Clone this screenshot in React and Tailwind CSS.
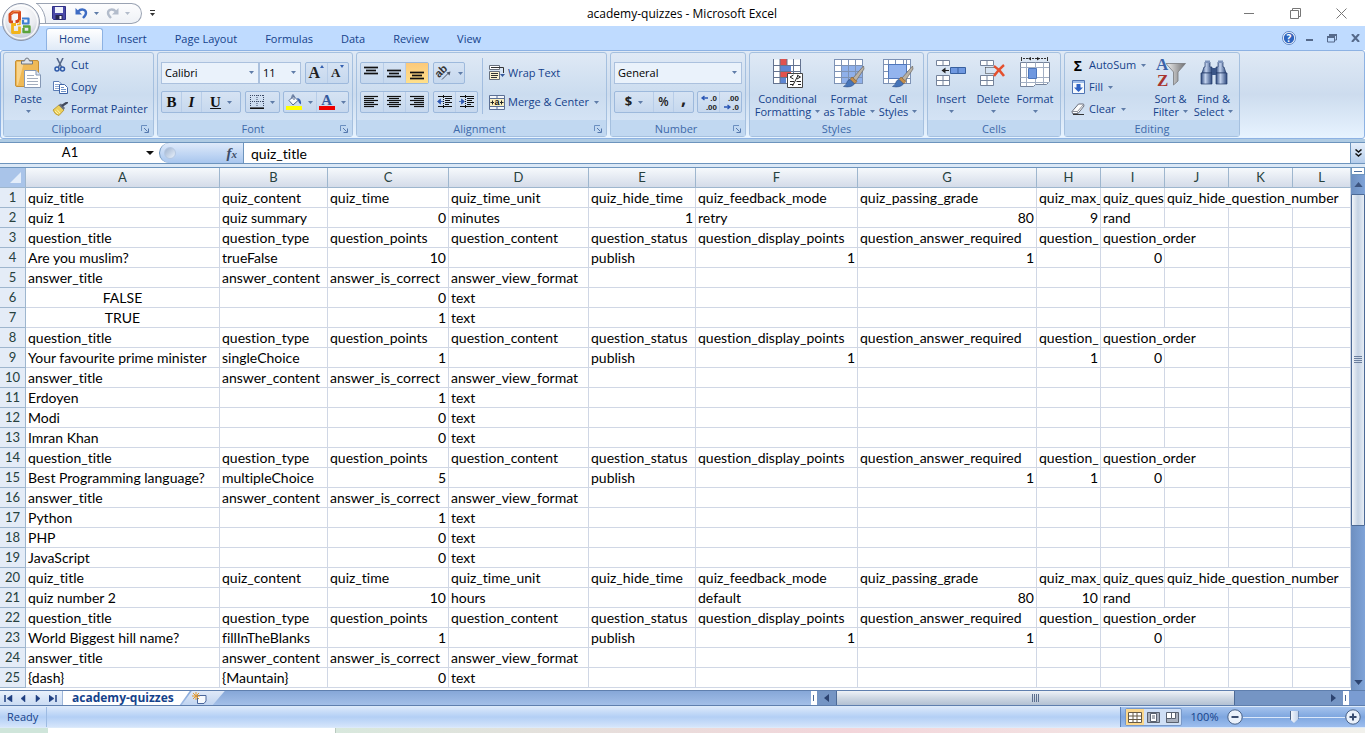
import React, { useState } from "react";
import clsx from "clsx";

const TABS = ["Home", "Insert", "Page Layout", "Formulas", "Data", "Review", "View"];

const COLUMNS = [
  { name: "A", width: "w-[194px]" },
  { name: "B", width: "w-[108px]" },
  { name: "C", width: "w-[121px]" },
  { name: "D", width: "w-[140px]" },
  { name: "E", width: "w-[107px]" },
  { name: "F", width: "w-[162px]" },
  { name: "G", width: "w-[179px]" },
  { name: "H", width: "w-16" },
  { name: "I", width: "w-16" },
  { name: "J", width: "w-16" },
  { name: "K", width: "w-16" },
  { name: "L", width: "" },
];

const QUIZ_HEAD = [
  "quiz_title",
  "quiz_content",
  "quiz_time",
  "quiz_time_unit",
  "quiz_hide_time",
  "quiz_feedback_mode",
  "quiz_passing_grade",
  "quiz_max_",
  "quiz_ques",
  { text: "quiz_hide_question_number", span: 3 },
];

const QUESTION_HEAD = [
  "question_title",
  "question_type",
  "question_points",
  "question_content",
  "question_status",
  "question_display_points",
  "question_answer_required",
  "question_",
  { text: "question_order", span: 2 },
];

const ANSWER_HEAD = [
  "answer_title",
  "answer_content",
  "answer_is_correct",
  "answer_view_format",
];

const ROWS = [
  QUIZ_HEAD,
  ["quiz 1", "quiz summary", 0, "minutes", 1, "retry", 80, 9, "rand"],
  QUESTION_HEAD,
  ["Are you muslim?", "trueFalse", 10, "", "publish", 1, 1, "", 0],
  ANSWER_HEAD,
  [false, "", 0, "text"],
  [true, "", 1, "text"],
  QUESTION_HEAD,
  ["Your favourite prime minister", "singleChoice", 1, "", "publish", 1, "", 1, 0],
  ANSWER_HEAD,
  ["Erdoyen", "", 1, "text"],
  ["Modi", "", 0, "text"],
  ["Imran Khan", "", 0, "text"],
  QUESTION_HEAD,
  ["Best Programming language?", "multipleChoice", 5, "", "publish", "", 1, 1, 0],
  ANSWER_HEAD,
  ["Python", "", 1, "text"],
  ["PHP", "", 0, "text"],
  ["JavaScript", "", 0, "text"],
  QUIZ_HEAD,
  ["quiz number 2", "", 10, "hours", "", "default", 80, 10, "rand"],
  QUESTION_HEAD,
  ["World Biggest hill name?", "fillInTheBlanks", 1, "", "publish", 1, 1, "", 0],
  ANSWER_HEAD,
  ["{dash}", "{Mauntain}", 0, "text"],
];

/* ---------- small shared pieces ---------- */

function Arrow({ className = "text-[#5f7ca8]" }) {
  return (
    <svg width="5" height="3" viewBox="0 0 5 3" className={clsx("shrink-0", className)}>
      <path d="M0 0H5L2.5 3Z" fill="currentColor" />
    </svg>
  );
}

function Group({ label, width, launcher, children }) {
  return (
    <section
      className={clsx(
        "flex flex-col shrink-0 rounded-[3px] border border-[#a5c0df] bg-linear-to-b from-[#dfe9f5] via-[#cbdcef] to-[#d9e7f8]",
        width
      )}
    >
      <div className="h-[68px] flex">{children}</div>
      <div className="h-4 pt-[2px] flex items-center bg-[#c1d8f1] text-[#3e6aaa]">
        <span className={clsx("flex-1 text-center", launcher && "pl-3")}>{label}</span>
        {launcher && (
          <button aria-label={`${label} options`} className="w-4 flex justify-center">
            <svg width="8" height="8" viewBox="0 0 8 8" fill="none" stroke="#6b8fc0">
              <path d="M.5 6V.5H6" />
              <path d="M3 3L6.5 6.5M7.5 3.5V7.5H3.5" stroke="#5578ad" />
            </svg>
          </button>
        )}
      </div>
    </section>
  );
}

function ToolBox({ children, className }) {
  return (
    <div
      className={clsx(
        "h-[22px] flex rounded-[2px] border border-[#9db9dc] bg-linear-to-b from-[#d6e3f3] to-[#c6d8ee] divide-x divide-[#b8cde8]",
        className
      )}
    >
      {children}
    </div>
  );
}

function Tool({ label, className, children, arrow }) {
  return (
    <button
      aria-label={label}
      className={clsx("flex-1 flex items-center justify-center gap-[6px]", className)}
    >
      {children}
      {arrow && <Arrow />}
    </button>
  );
}

function SmallButton({ icon, arrow, children }) {
  return (
    <button className="h-[22px] flex items-center gap-[3px] whitespace-nowrap">
      <span className="w-4 flex justify-center">{icon}</span>
      {children}
      {arrow && <Arrow className="ml-[2px] text-[#5f7ca8]" />}
    </button>
  );
}

function BigButton({ icon, lines, width }) {
  return (
    <button className={clsx("flex flex-col items-center pt-1 leading-[13px] whitespace-nowrap", width)}>
      <span className="h-8 mb-[3px] flex items-center">{icon}</span>
      <span>{lines[0]}</span>
      <span className="h-[13px] flex items-center gap-1">
        {lines[1]}
        <Arrow />
      </span>
    </button>
  );
}

function Picker({ label, options, width }) {
  return (
    <div className={clsx("relative h-[22px]", width)}>
      <select
        aria-label={label}
        className="appearance-none w-full h-full pl-[3px] border border-[#abc1de] bg-[#eaf2fb] text-black"
      >
        {options.map((o) => (
          <option key={o}>{o}</option>
        ))}
      </select>
      <span className="absolute right-[5px] top-[9px] pointer-events-none">
        <Arrow />
      </span>
    </div>
  );
}

/* ---------- icons ---------- */

function OfficeLogo() {
  return (
    <svg width="40" height="40" viewBox="0 0 40 40">
      <defs>
        <radialGradient id="orb" cx="50%" cy="30%" r="70%">
          <stop offset="0" stopColor="#fff" />
          <stop offset=".6" stopColor="#e9ebf0" />
          <stop offset="1" stopColor="#b9c0cf" />
        </radialGradient>
      </defs>
      <circle cx="20" cy="20" r="18.5" fill="url(#orb)" stroke="#8b95a8" />
      <circle cx="20" cy="20" r="16.5" fill="none" stroke="#fff" strokeWidth="1.5" opacity=".8" />
      <g fill="none" strokeLinejoin="round">
        <path d="M12 20H10.500Q9 20 9 18.500V12.500L12 10H18.500V17.500L16.500 19.500H14.500" stroke="#d7491c" strokeWidth="3" />
        <path d="M10 12L13 9.500H18.500" stroke="#f08a45" strokeWidth="1" />
        <path d="M21 16.500H27.500V21.500H22V18" stroke="#3f7fd0" strokeWidth="2.200" />
        <path d="M15 22.500H11.500V30.500H18.500V24.500" stroke="#f2b41b" strokeWidth="2.800" />
        <path d="M22 24.500H28.500V30H22.500V26" stroke="#5aa43a" strokeWidth="2.400" />
        <path d="M16 22.500H19V18" stroke="#f2b41b" strokeWidth="1.500" />
      </g>
    </svg>
  );
}

const SaveIcon = () => (
  <svg width="14" height="14" viewBox="0 0 14 14">
    <path d="M.5.500H13.500V13.500H1.500L.5 12.500Z" fill="#4a49a8" stroke="#2f2f86" />
    <path d="M3 1H11V7H3Z" fill="#eef1fb" />
    <path d="M3.500 9H10.500V13.500H3.500Z" fill="#26264f" />
    <path d="M7.500 10H9.500V13H7.500Z" fill="#fff" />
  </svg>
);

const UndoIcon = ({ redo }) => (
  <svg width="13" height="12" viewBox="0 0 13 12" className={redo ? "-scale-x-100" : ""}>
    <path
      d="M3 4.500C6 1.500 11 2 11 6C11 8 9.500 9.500 8 11"
      fill="none"
      stroke={redo ? "#b3bccb" : "#3e6cc4"}
      strokeWidth="2.400"
    />
    <path d="M.5 1V7.500H7Z" fill={redo ? "#b3bccb" : "#3e6cc4"} />
  </svg>
);

const PasteIcon = () => (
  <svg width="28" height="32" viewBox="0 0 28 32">
    <rect x="1.500" y="3.500" width="23" height="26" rx="1.500" fill="#efb956" stroke="#c68f35" />
    <path d="M3 5H10L4 28H3Z" fill="#f8d48d" />
    <path d="M7.500 7V4H10.500Q11 1 13 1T15.500 4H18.500V7Z" fill="#dfe3e8" stroke="#6f7783" />
    <path d="M10.500 13.500H22L26.500 18V30.500H10.500Z" fill="#fff" stroke="#8598b5" />
    <path d="M22 13.500V18H26.500" fill="#dbe5f2" stroke="#8598b5" />
    <path d="M13 18.500H20M13 21.500H24M13 24.500H24M13 27.500H24" stroke="#a4aebe" />
  </svg>
);

const CutIcon = () => (
  <svg width="12" height="14" viewBox="0 0 12 14" fill="none">
    <path d="M3 0L7.500 9M9 0L4.500 9" stroke="#56688a" strokeWidth="1.600" />
    <circle cx="3" cy="11" r="2" stroke="#2e59a8" strokeWidth="1.500" />
    <circle cx="8.500" cy="11" r="2" stroke="#2e59a8" strokeWidth="1.500" />
  </svg>
);

const CopyIcon = () => (
  <svg width="15" height="13" viewBox="0 0 15 13">
    <path d="M.5.500H6L8.500 3V9.500H.5Z" fill="#fff" stroke="#5a7cb5" />
    <path d="M2 3.500H6M2 5.500H6M2 7.500H6" stroke="#8fa9d3" />
    <path d="M6.500 3.500H11.500L14.500 6.500V12.500H6.500Z" fill="#fff" stroke="#3f65a6" />
    <path d="M8 6.500H11M8 8.500H13M8 10.500H13" stroke="#6f92c8" />
  </svg>
);

const PainterIcon = () => (
  <svg width="16" height="14" viewBox="0 0 16 14">
    <path d="M1 8L7 3L12 8L7 13.500Q3 13 1 8Z" fill="#ecd05c" stroke="#b3912c" strokeWidth=".8" />
    <path d="M3 9L6 12M5 7.500L8 11" stroke="#fff3b0" />
    <path d="M6.500 3L9 1.500L13 6L11.500 8Z" fill="#6a7180" />
    <path d="M10.500 3.500L15 .5" stroke="#424a5c" strokeWidth="2.200" strokeLinecap="round" />
  </svg>
);

const BorderIcon = () => (
  <svg width="14" height="14" viewBox="0 0 14 14" stroke="#3c4a66" fill="none">
    <path d="M0 .5H14M0 6.500H14M.5 0V12M7 0V12M13.500 0V12" strokeDasharray="1 1" />
    <path d="M0 13.200H14" stroke="#111" strokeWidth="1.600" />
  </svg>
);

const FillColorIcon = () => (
  <svg width="16" height="16" viewBox="0 0 16 16">
    <path d="M3 6.500L7.500 2L12 6.500L7 11Z" fill="#f7fafd" stroke="#51678f" />
    <path d="M6 5V1.500Q7.500-.5 8 2V6" fill="none" stroke="#51678f" />
    <path d="M11 4Q15.500 4 15 10.500Q12.500 9 12 6.500Z" fill="#3a63ad" />
    <path d="M0 12H16V16H0Z" fill="#ffff00" />
  </svg>
);

const FontColorIcon = () => (
  <span className="flex flex-col items-center">
    <span className="h-3 leading-3 font-['Liberation_Serif',serif] font-bold text-[15px] text-[#35599c]">A</span>
    <span className="w-4 h-1 bg-[#ee0000]" />
  </span>
);

function LinesIcon({ widths, align = "center", top = 0 }) {
  return (
    <svg width="15" height="14" viewBox="0 0 15 14" stroke="#111">
      {widths.map((w, i) => {
        const x = align === "left" ? 0 : align === "right" ? 14 - w : (14 - w) / 2;
        const y = top + i * (widths.length > 3 ? 2 : 3) + 1.5;
        return <path key={i} d={`M${x} ${y}H${x + w}`} strokeWidth={widths.length > 3 ? 1.2 : 1.7} />;
      })}
    </svg>
  );
}

const IndentIcon = ({ right }) => (
  <svg width="16" height="14" viewBox="0 0 16 14" stroke="#111">
    <path d="M1 1.500H15M8 3.500H15M8 5.500H13M8 7.500H15M8 9.500H12M1 11.500H15" strokeWidth="1.200" />
    <path d="M6.500 0V14" strokeDasharray="1 1" />
    {right ? (
      <path d="M0 6.500H3M2.500 4L5.500 6.500L2.500 9Z" stroke="#3058b0" fill="#3058b0" strokeWidth=".8" />
    ) : (
      <path d="M6 6.500H3M3.500 4L.5 6.500L3.500 9Z" stroke="#3058b0" fill="#3058b0" strokeWidth=".8" />
    )}
  </svg>
);

const OrientationIcon = () => (
  <svg width="16" height="14" viewBox="0 0 16 14" className="overflow-visible">
    <text
      x="-1"
      y="9"
      transform="rotate(-45 5 6)"
      className="font-['Liberation_Sans',sans-serif] text-[11px] font-bold"
      fill="#333"
    >
      ab
    </text>
    <path d="M6 13.500L13 6.500" stroke="#4b5568" />
    <path d="M14.500 5.500L10.500 6.500L13.500 9.500Z" fill="#4b5568" />
  </svg>
);

const WrapIcon = () => (
  <svg width="16" height="16" viewBox="0 0 16 16">
    <path d="M.5.500H10.500V4.500H.5Z" fill="#fff" stroke="#666f7d" />
    <path d="M.5 6.500H10.500V14.500H.5Z" fill="#fbf3cf" stroke="#666f7d" />
    <path d="M2 2.500H14.500V8" fill="none" stroke="#333" />
    <path d="M2 8.500H9M2 10.500H9M2 12.500H8" stroke="#333" />
    <path d="M11 9H16L13.500 12Z" fill="#35599c" />
  </svg>
);

const MergeIcon = () => (
  <svg width="16" height="15" viewBox="0 0 16 15">
    <path d="M.5.500H15.500V14.500H.5Z" fill="#f4f7fb" stroke="#5b6f94" />
    <path d="M8 0V3.500M8 11.500V15M0 3.500H16M0 11.500H16" stroke="#5b6f94" />
    <path d="M1 4H15V11H1Z" fill="#fbf0c0" />
    <path d="M1.500 7.500H5M11 7.500H14.500M3.500 5.500V9.500M12.500 5.500V9.500" stroke="#222" />
    <text x="5.500" y="10" className="font-['Liberation_Sans',sans-serif] text-[9px] font-bold" fill="#111">
      a
    </text>
  </svg>
);

const DecimalIcon = ({ more }) => (
  <svg width="18" height="18" viewBox="0 0 18 18" className="overflow-visible">
    <g className="font-['Liberation_Sans',sans-serif] text-[8px] font-bold" fill="#222">
      <text x="17" y="8" textAnchor="end">{more ? ".0" : ".00"}</text>
      <text x="17" y="17" textAnchor="end">{more ? ".00" : ".0"}</text>
    </g>
    {more ? (
      <path d="M2 5H8M4.500 3L2 5L4.500 7" stroke="#2b57b5" strokeWidth="1.300" fill="none" />
    ) : (
      <path d="M2 14H8M5.500 12L8 14L5.500 16" stroke="#2b57b5" strokeWidth="1.300" fill="none" />
    )}
  </svg>
);

const ConditionalIcon = () => (
  <svg width="30" height="30" viewBox="0 0 30 30">
    <path d="M.5 1.500H27.500V25.500H.5Z" fill="#fff" />
    <path d="M7 1H14V8H7ZM7 14H18V20H7Z" fill="#e0524e" />
    <path d="M7 8H18V14H7ZM7 20H13V26H7Z" fill="#5d86d3" />
    <path d="M.5 1V26M7 1V26M14 1V8M20.500 1V26M27.500 1V26M0 7.500H28M0 13.500H28M0 19.500H28M0 25.500H28" stroke="#647390" fill="none" />
    <path d="M14.500 15.500H29.500V29.500H14.500Z" fill="#fff" stroke="#444" />
    <path d="M20.500 17L17 19L20.500 21M17 23.500H21M24 17L27.500 19L24 21M23.500 23.500H28M17 26.500H20M25 26.500H28M19.500 28L25 17.500" stroke="#222" fill="none" />
  </svg>
);

const Brush = () => (
  <g>
    <path d="M30.500 8L20 20L23 23L31 11Z" fill="#b9b2a6" stroke="#6d675f" strokeWidth=".7" />
    <path d="M19 19L24 23.500L21.500 26L17 21.500Z" fill="#c58f4c" stroke="#865c2b" strokeWidth=".6" />
    <path d="M17 21.500L21.500 26Q18 30 10.500 28.500Q14 26.500 14 24Q14.500 22 17 21.500Z" fill="#4674b8" stroke="#294b86" strokeWidth=".6" />
  </g>
);

const TableIcon = () => (
  <svg width="32" height="30" viewBox="0 0 32 30">
    <path d="M1.500 1.500H29.500V25.500H1.500Z" fill="#fff" />
    <path d="M8 8H29V26H8Z" fill="#8fb0ea" />
    <path d="M1.500 1V26M8.500 1V26M15.500 1V26M22.500 1V26M29.500 1V26M1 1.500H30M1 7.500H30M1 13.500H30M1 19.500H30M1 25.500H30" stroke="#7d92b5" />
    <Brush />
  </svg>
);

const CellStylesIcon = () => (
  <svg width="32" height="30" viewBox="0 0 32 30">
    <path d="M1.500 1.500H28.500V25.500H1.500Z" fill="#fff" />
    <path d="M6.500 1V26M13.500 1V6M21.500 1V6M24.500 1V26M1.500 1V26M28.500 1V26M1 1.500H29M1 6.500H29M1 20.500H29M1 25.500H29M1 13.500H6M25 13.500H29" stroke="#7d92b5" />
    <path d="M6.500 6.500H24.500V20.500H6.500Z" fill="#93b4ee" stroke="#4f76bb" />
    <Brush />
  </svg>
);

const InsertIcon = () => (
  <svg width="32" height="30" viewBox="0 0 32 30">
    <path d="M1.500 2.500H14.500V7.500H1.500ZM1.500 17.500H14.500V27.500H1.500Z" fill="#fff" stroke="#75839b" />
    <path d="M8 2.500V7.500M8 17.500V27.500M1.500 22.500H14.500" stroke="#75839b" />
    <path d="M15.500 9.500H30.500V15.500H15.500Z" fill="#6f98e0" stroke="#38609f" />
    <path d="M23 9.500V15.500" stroke="#38609f" />
    <path d="M7 12.500H14" stroke="#222" />
    <path d="M10.500 9.500L6.500 12.500L10.500 15.500Z" fill="#222" />
  </svg>
);

const DeleteIcon = () => (
  <svg width="28" height="30" viewBox="0 0 28 30">
    <path d="M1.500 2.500H14.500V7.500H1.500ZM1.500 17.500H14.500V27.500H1.500Z" fill="#fff" stroke="#75839b" />
    <path d="M8 2.500V7.500M8 17.500V27.500M1.500 22.500H14.500" stroke="#75839b" />
    <path d="M6.500 9.500H16M6.500 15.500H16M6.500 9.500V15.500" stroke="#333" strokeDasharray="1 1" fill="none" />
    <path d="M15 8Q21 12 25 18M25 7Q19 12 15 18" stroke="#e4502e" strokeWidth="2.400" fill="none" />
  </svg>
);

const FormatIcon = () => (
  <svg width="32" height="32" viewBox="0 0 32 32">
    <path d="M1.500 5.500H30.500V24.500L27.500 27.500H16.500L14.500 29.500H1.500Z" fill="#fff" stroke="#75839b" />
    <path d="M7.500 5.500V29M16.500 5.500V27M24.500 5.500V27M1.500 10.500H30M1.500 20.500H30M1.500 25.500H30" stroke="#a3afc3" />
    <path d="M9.500 11.500H17.500V21.500H9.500Z" fill="#6f98e0" stroke="#4c76bd" />
    <path d="M2.500 0V4M28.500 0V4" stroke="#333" />
    <path d="M4 1.500H27" stroke="#333" strokeDasharray="2 1" />
    <path d="M12 0L9 1.500L12 3.500ZM18 0L21 1.500L18 3.500Z" fill="#222" />
  </svg>
);

const FillDownIcon = () => (
  <svg width="13" height="14" viewBox="0 0 13 14">
    <path d="M.5.500H12.500V13.500H.5Z" fill="#f6f9fd" stroke="#4e73b3" />
    <path d="M1 1H12V3H1Z" fill="#9dbbe8" />
    <path d="M4.500 4H8.500V7.500H11L6.500 12L2 7.500H4.500Z" fill="#2f62c4" />
  </svg>
);

const EraserIcon = () => (
  <svg width="14" height="12" viewBox="0 0 14 12">
    <path d="M1 8.500L7.500 1H12.500L13 3L7 10.500H1.500Z" fill="#fdfdfd" stroke="#6a6f7c" />
    <path d="M1 8.500H6.500L12.500 1.500M6.500 8.500L7 10.500" fill="none" stroke="#8c919c" />
    <path d="M2 11.500H13" stroke="#333" />
  </svg>
);

const SortIcon = () => (
  <svg width="30" height="30" viewBox="0 0 30 30" className="overflow-visible">
    <defs>
      <linearGradient id="funnel">
        <stop offset="0" stopColor="#f3f3f3" />
        <stop offset="1" stopColor="#6e6e70" />
      </linearGradient>
    </defs>
    <path d="M10 5.500H29.500L22 14V23L17.500 27V14Z" fill="url(#funnel)" stroke="#77787c" strokeWidth=".8" />
    <g className="font-['Liberation_Serif',serif] text-[17px] font-bold">
      <text x="0" y="12" fill="#3b62a8">A</text>
      <text x="1" y="28" fill="#a8352f">Z</text>
    </g>
  </svg>
);

const FindIcon = () => (
  <svg width="28" height="28" viewBox="0 0 28 28">
    <defs>
      <linearGradient id="tube">
        <stop offset="0" stopColor="#2c477b" />
        <stop offset=".4" stopColor="#c3d3ee" />
        <stop offset="1" stopColor="#2c477b" />
      </linearGradient>
    </defs>
    <g fill="url(#tube)" stroke="#263e6c" strokeWidth=".7">
      <path d="M5 3H10V8H12V14H2L4 8H5Z" />
      <path d="M18 3H23V8H24L26 14H16V8H18Z" />
      <path d="M1 14H12V25H1Z" />
      <path d="M16 14H27V25H16Z" />
    </g>
    <path d="M12 9H16V16H12Z" fill="#3b5688" />
    <path d="M5 1.500H10V4H5ZM18 1.500H23V4H18Z" fill="#7d93bb" />
  </svg>
);

/* ---------- sections ---------- */

function TitleBar() {
  return (
    <header className="relative h-[26px] flex items-center bg-white text-black">
      <div className="flex-1 flex items-center self-stretch">
        <div className="relative overflow-hidden ml-9 h-[21px] w-[106px] pl-4 pr-4 flex items-center gap-[6px] rounded-r-full border border-l-0 border-[#9aa3b3] bg-linear-to-b from-[#fdfdfe] to-[#eef1f6]">
          <span className="absolute -left-10 -top-[7px] size-[50px] rounded-full border border-[#9aa3b3] bg-white" />
          <button aria-label="Save"><SaveIcon /></button>
          <button aria-label="Undo" className="ml-[3px] flex items-center gap-[6px]">
            <UndoIcon />
            <Arrow />
          </button>
          <button aria-label="Redo" className="ml-px flex items-center gap-[6px]">
            <UndoIcon redo />
            <Arrow className="text-[#b3bccb]" />
          </button>
        </div>
        <button aria-label="Customize Quick Access Toolbar" className="ml-2 flex flex-col items-center gap-[2px]">
          <span className="w-[5px] h-px bg-[#333]" />
          <Arrow className="text-[#333]" />
        </button>
      </div>
      <h1 className="pt-[2px] text-[12px]">academy-quizzes - Microsoft Excel</h1>
      <div className="flex-1 pr-px flex justify-end text-[#777]">
        <button aria-label="Minimize" className="w-[46px] flex justify-center items-center">
          <span className="w-[10px] h-px bg-[#777]" />
        </button>
        <button aria-label="Restore" className="w-[46px] flex justify-center">
          <svg width="11" height="11" viewBox="0 0 11 11" fill="none" stroke="currentColor">
            <path d="M.5 2.500H8.500V10.500H.5ZM2.500 2.500V.5H10.500V8.500H8.500" />
          </svg>
        </button>
        <button aria-label="Close" className="w-[46px] flex justify-center">
          <svg width="11" height="11" viewBox="0 0 11 11" fill="none" stroke="currentColor">
            <path d="M.5.500L10.500 10.500M10.500.500L.5 10.500" />
          </svg>
        </button>
      </div>
      <button aria-label="Office Button" className="absolute left-px top-[2px] z-10">
        <OfficeLogo />
      </button>
    </header>
  );
}

function TabRow() {
  const [active, setActive] = useState("Home");
  return (
    <nav className="h-6 pl-[46px] pr-[5px] flex items-end bg-[#bfdbff]">
      {TABS.map((tab) => (
        <button
          key={tab}
          onClick={() => setActive(tab)}
          className={clsx(
            "h-[22px] border border-b-0 rounded-t-[3px]",
            tab === active
              ? "px-3 border-[#8db2e3] bg-linear-to-b from-white to-[#e0eaf7]"
              : "px-[13px] border-transparent"
          )}
        >
          {tab}
        </button>
      ))}
      <div className="ml-auto h-full flex items-center gap-[10px] text-[#55698a]">
        <button aria-label="Help">
          <svg width="14" height="14" viewBox="0 0 14 14" className="overflow-visible">
            <circle cx="7" cy="7" r="6.500" fill="#fff" stroke="#5e85c4" />
            <circle cx="7" cy="7" r="5.200" fill="#2f64be" />
            <text x="7" y="10.500" textAnchor="middle" fill="#fff" className="text-[10px] font-bold">?</text>
          </svg>
        </button>
        <button aria-label="Minimize workbook" className="pt-1">
          <span className="block w-[7px] h-[2px] bg-[#55698a]" />
        </button>
        <button aria-label="Restore workbook" className="ml-1">
          <svg width="10" height="9" viewBox="0 0 10 9" fill="none" stroke="currentColor">
            <path d="M.5 3.500H7.500V8H.5ZM2.500 3V1H9.500V6H8" />
            <path d="M0 3H8M2 1H10" strokeWidth="2" />
          </svg>
        </button>
        <button aria-label="Close workbook" className="ml-1">
          <svg width="9" height="8" viewBox="0 0 9 8" stroke="currentColor" strokeWidth="2">
            <path d="M1 0L8 8M8 0L1 8" />
          </svg>
        </button>
      </div>
    </nav>
  );
}

function Ribbon() {
  return (
    <div className="h-[89px] px-[2px] pt-px pb-px flex gap-[3px] border border-[#8db2e3] rounded-[3px] bg-linear-to-b from-[#dfe9f5] via-[#cddcee] to-[#e7f3ff]">
      <Group label="Clipboard" width="w-[151px]" launcher>
        <BigButton icon={<PasteIcon />} lines={["Paste"]} width="w-12" />
        <div className="pt-[1px] flex flex-col">
          <SmallButton icon={<CutIcon />}>Cut</SmallButton>
          <SmallButton icon={<CopyIcon />}>Copy</SmallButton>
          <SmallButton icon={<PainterIcon />}>Format Painter</SmallButton>
        </div>
      </Group>

      <Group label="Font" width="w-[196px]" launcher>
        <div className="flex-1 px-[3px] pt-[9px] flex flex-col gap-[7px]">
          <div className="flex justify-between">
            <div className="flex">
              <Picker label="Font" options={["Calibri", "Arial", "Cambria"]} width="w-[98px]" />
              <Picker label="Font size" options={["11", "12", "14"]} width="w-[42px]" />
            </div>
            <ToolBox className="w-11">
              <Tool label="Increase font size">
                <span className="font-['Liberation_Serif',serif] font-bold text-[16px] text-[#222] flex">
                  A<svg width="4" height="3" viewBox="0 0 4 3" className="mt-1"><path d="M0 3H4L2 0Z" fill="#3560b0" /></svg>
                </span>
              </Tool>
              <Tool label="Decrease font size">
                <span className="font-['Liberation_Serif',serif] font-bold text-[13px] text-[#222] flex">
                  A<svg width="4" height="3" viewBox="0 0 4 3" className="mt-[2px]"><path d="M0 0H4L2 3Z" fill="#3560b0" /></svg>
                </span>
              </Tool>
            </ToolBox>
          </div>
          <div className="flex justify-between">
            <ToolBox className="w-20 font-['Liberation_Serif',serif] text-[15px] font-bold text-[#111]">
              <Tool label="Bold">B</Tool>
              <Tool label="Italic"><i>I</i></Tool>
              <Tool label="Underline" className="grow-[2]" arrow><u>U</u></Tool>
            </ToolBox>
            <ToolBox className="w-[35px]">
              <Tool label="Borders" arrow><BorderIcon /></Tool>
            </ToolBox>
            <ToolBox className="w-[66px]">
              <Tool label="Fill color" arrow><FillColorIcon /></Tool>
              <Tool label="Font color" arrow><FontColorIcon /></Tool>
            </ToolBox>
          </div>
        </div>
      </Group>

      <Group label="Alignment" width="w-[251px]" launcher>
        <div className="pl-[3px] pt-[9px] flex flex-col gap-[7px]">
          <div className="flex gap-1">
            <ToolBox className="w-[69px]">
              <Tool label="Top align"><LinesIcon widths={[14, 10, 14]} /></Tool>
              <Tool label="Middle align"><LinesIcon widths={[14, 10, 14]} top={3} /></Tool>
              <Tool label="Bottom align" className="bg-linear-to-b from-[#fcc97a] to-[#ffe08a]">
                <LinesIcon widths={[14, 10, 14]} top={5} />
              </Tool>
            </ToolBox>
            <ToolBox className="w-8">
              <Tool label="Orientation" className="gap-[3px]" arrow><OrientationIcon /></Tool>
            </ToolBox>
          </div>
          <div className="flex gap-1">
            <ToolBox className="w-[69px]">
              <Tool label="Align left"><LinesIcon widths={[14, 10, 14, 10, 14, 10]} align="left" /></Tool>
              <Tool label="Center"><LinesIcon widths={[14, 10, 14, 10, 14, 10]} /></Tool>
              <Tool label="Align right"><LinesIcon widths={[14, 10, 14, 10, 14, 10]} align="right" /></Tool>
            </ToolBox>
            <ToolBox className="w-[45px]">
              <Tool label="Decrease indent"><IndentIcon /></Tool>
              <Tool label="Increase indent"><IndentIcon right /></Tool>
            </ToolBox>
          </div>
        </div>
        <div className="ml-1 mt-[5px] w-px h-14 bg-[#a2bddf]" />
        <div className="pl-[6px] pt-[9px] flex flex-col gap-[7px]">
          <SmallButton icon={<WrapIcon />}>Wrap Text</SmallButton>
          <SmallButton icon={<MergeIcon />} arrow>Merge &amp; Center</SmallButton>
        </div>
      </Group>

      <Group label="Number" width="w-[136px]" launcher>
        <div className="flex-1 px-[3px] pt-[9px] flex flex-col gap-[7px]">
          <Picker label="Number format" options={["General", "Number", "Currency"]} width="w-full" />
          <div className="flex justify-between text-[#222]">
            <ToolBox className="w-20">
              <Tool label="Accounting format" className="grow-[2]" arrow>
                <span className="font-bold text-[13px]">$</span>
              </Tool>
              <Tool label="Percent"><span className="text-[12px] font-semibold">%</span></Tool>
              <Tool label="Comma">
                <span className="font-bold text-[18px] leading-none pb-2">,</span>
              </Tool>
            </ToolBox>
            <ToolBox className="w-[45px]">
              <Tool label="Increase decimal"><DecimalIcon more /></Tool>
              <Tool label="Decrease decimal"><DecimalIcon /></Tool>
            </ToolBox>
          </div>
        </div>
      </Group>

      <Group label="Styles" width="w-[175px]">
        <div className="pl-[3px] flex">
          <BigButton icon={<ConditionalIcon />} lines={["Conditional", "Formatting"]} width="w-[69px]" />
          <BigButton icon={<TableIcon />} lines={["Format", "as Table"]} width="w-[54px]" />
          <BigButton icon={<CellStylesIcon />} lines={["Cell", "Styles"]} width="w-11" />
        </div>
      </Group>

      <Group label="Cells" width="w-[134px]">
        <div className="pl-[2px] flex">
          <BigButton icon={<InsertIcon />} lines={["Insert"]} width="w-[42px]" />
          <BigButton icon={<DeleteIcon />} lines={["Delete"]} width="w-[42px]" />
          <BigButton icon={<FormatIcon />} lines={["Format"]} width="w-[42px]" />
        </div>
      </Group>

      <Group label="Editing" width="w-[176px]">
        <div className="w-[84px] pl-[5px] pt-[1px] flex flex-col">
          <SmallButton icon={<span className="font-bold text-[14px] text-black">Σ</span>} arrow>AutoSum</SmallButton>
          <SmallButton icon={<FillDownIcon />} arrow>Fill</SmallButton>
          <SmallButton icon={<EraserIcon />} arrow>Clear</SmallButton>
        </div>
        <BigButton icon={<SortIcon />} lines={["Sort &", "Filter"]} width="w-[43px]" />
        <BigButton icon={<FindIcon />} lines={["Find &", "Select"]} width="w-[43px]" />
      </Group>
    </div>
  );
}

function FormulaBar() {
  return (
    <div className="pt-[3px] bg-[#afcbe3]">
      <div className="h-[22px] flex items-stretch border-y border-[#6d94bd] bg-white text-black font-['Lato',sans-serif]">
        <label className="w-[158px] flex items-center">
          <span className="sr-only">Name box</span>
          <input defaultValue="A1" className="w-[140px] text-center text-[13px] outline-none" />
          <svg width="8" height="4" viewBox="0 0 8 4" className="ml-[6px]"><path d="M0 0H8L4 4Z" fill="#111" /></svg>
        </label>
        <div className="ml-px w-[84px] pl-1 pr-[6px] flex items-center justify-between rounded-l-full border-l border-[#6d94bd] bg-linear-to-b from-[#dfeafa] to-[#a8c6ee]">
          <span className="size-3 rounded-full border border-[#b5c8e2] bg-linear-to-br from-[#9fb3cf] to-[#eaf2fc]" />
          <button aria-label="Insert function" className="font-['Liberation_Serif',serif] italic font-bold text-[15px] leading-none text-[#3d4c66]">
            f<span className="text-[11px]">x</span>
          </button>
        </div>
        <input
          aria-label="Formula"
          defaultValue="quiz_title"
          className="flex-1 min-w-0 pl-[7px] border-l border-[#6d94bd] text-[14px] outline-none [font-variant-ligatures:none]"
        />
        <button aria-label="Expand formula bar" className="w-[15px] flex items-center justify-center border-l border-[#6d94bd] bg-linear-to-b from-[#e6effa] to-[#b5cdeb]">
          <svg width="7" height="8" viewBox="0 0 7 8" fill="none" stroke="#111" strokeWidth="1.500">
            <path d="M.5.500L3.500 3L6.500.500M.5 4.500L3.500 7L6.500 4.500" />
          </svg>
        </button>
      </div>
      <div className="h-[3px] bg-[#dbe8f6]" />
    </div>
  );
}

function Cell({ value }) {
  const item = value !== null && typeof value === "object" ? value : { text: value };
  const { text, span } = item;
  return (
    <td
      colSpan={span}
      className={clsx(
        "h-5 px-[2px] leading-[19px] border-r border-b border-[#d0d7e5] overflow-hidden whitespace-nowrap",
        typeof text === "number" && "text-right",
        typeof text === "boolean" && "text-center"
      )}
    >
      {typeof text === "boolean" ? String(text).toUpperCase() : text}
    </td>
  );
}

function Sheet() {
  return (
    <table className="w-full table-fixed border-separate border-spacing-0 border-t border-[#6d94bd] bg-white text-[14px] text-black font-['Lato',sans-serif] [font-variant-ligatures:none]">
      <colgroup>
        <col className="w-[26px]" />
        {COLUMNS.map((c) => (
          <col key={c.name} className={c.width} />
        ))}
      </colgroup>
      <thead>
        <tr>
          <th aria-label="Select all" className="h-5 p-0 border-r border-b border-[#9eb6ce] bg-[#a9c4e9]">
            <svg width="11" height="11" viewBox="0 0 11 11" className="ml-auto mr-1">
              <path d="M11 0V11H0Z" fill="#e3edfa" />
            </svg>
          </th>
          {COLUMNS.map((c) => (
            <th
              key={c.name}
              scope="col"
              className="h-5 p-0 text-[13px] leading-[19px] font-normal text-[#27413e] border-r border-b border-[#9eb6ce] bg-linear-to-b from-[#f6f9fc] to-[#d4dce9]"
            >
              {c.name}
            </th>
          ))}
        </tr>
      </thead>
      <tbody>
        {ROWS.map((row, r) => {
          const used = row.reduce((n, v) => n + ((v && v.span) || 1), 0);
          const blanks = Array(COLUMNS.length - used).fill("");
          return (
            <tr key={r}>
              <th scope="row" className="h-5 p-0 text-[13px] leading-[19px] font-normal text-[#27413e] border-r border-b border-[#9eb6ce] bg-[#e4ecf7]">
                {r + 1}
              </th>
              {[...row, ...blanks].map((value, i) => (
                <Cell key={i} value={value} />
              ))}
            </tr>
          );
        })}
      </tbody>
    </table>
  );
}

function VerticalScroll() {
  return (
    <div className="w-[14px] shrink-0 flex flex-col bg-linear-to-r from-[#6d8fc0] to-[#7fa3d8]">
      <div className="h-2 flex items-center justify-center border border-[#6d94bd] bg-white">
        <span className="w-2 h-px bg-[#4d6f9f]" />
      </div>
      <button aria-label="Scroll up" className="h-[19px] flex items-center justify-center">
        <Arrow className="rotate-180 w-[9px] h-[5px] text-[#3d5580]" />
      </button>
      <div className="h-[332px] flex items-center justify-center rounded-[1px] border border-[#4d6a96] bg-linear-to-r from-[#f2f5f9] via-[#c6d3e4] to-[#e6edf5]">
        <svg width="8" height="8" viewBox="0 0 8 8" stroke="#6c7f9e">
          <path d="M0 .5H8M0 2.500H8M0 4.500H8M0 6.500H8" />
        </svg>
      </div>
      <button aria-label="Scroll down" className="mt-auto h-4 flex items-center justify-center">
        <Arrow className="w-[9px] h-[5px] text-[#2c4370]" />
      </button>
    </div>
  );
}

const NAV = [
  { label: "First sheet", d: "M8 0V7L3 3.500Z" },
  { label: "Previous sheet", d: "M6 0V7L2 3.500Z" },
  { label: "Next sheet", d: "M2 0V7L6 3.500Z" },
  { label: "Last sheet", d: "M0 0V7L5 3.500Z" },
];

function SheetTabs() {
  return (
    <div className="h-4 flex border-t border-b border-[#5f7fae] bg-linear-to-b from-[#86a7d8] to-[#a3bfe8]">
      <div className="w-[59%] flex items-stretch">
        <div className="w-[62px] px-1 flex items-center justify-between bg-linear-to-b from-[#e9f1fb] to-[#cbdcf3]">
          {NAV.map((n) => (
            <button key={n.label} aria-label={n.label}>
              <svg width="9" height="7" viewBox="0 0 9 7" fill="#1f3f80" stroke="#1f3f80" strokeWidth=".5">
                <path d={n.d} />
                {n.label.includes("First") && <path d="M1 0V7" strokeWidth="1.500" />}
                {n.label.includes("Last") && <path d="M7 0V7" strokeWidth="1.500" />}
              </svg>
            </button>
          ))}
        </div>
        <button className="pl-[9px] pr-4 bg-white text-[12px] leading-[14px] font-bold border-l border-[#9db6d9] [clip-path:polygon(0_0,100%_0,calc(100%-10px)_100%,0_100%)]">
          academy-quizzes
        </button>
        <button aria-label="Insert worksheet" className="-ml-2 w-[43px] pr-2 flex items-center justify-center bg-linear-to-b from-[#dfe9f8] to-[#c0d4f0] [clip-path:polygon(10px_0,100%_0,calc(100%-12px)_100%,0_100%)]">
          <svg width="15" height="12" viewBox="0 0 15 12">
            <path d="M5.500 3.500H14V9L12 11.500H5.500Z" fill="#f6f9fd" stroke="#4a679c" />
            <path d="M4 0V8M0 4H8M1 1L7 7M7 1L1 7" stroke="#e59a2c" />
          </svg>
        </button>
      </div>
      <div className="flex-1 flex items-stretch">
        <span className="ml-auto w-[6px] px-[2px] py-1 bg-white flex"><span className="w-px bg-[#4d6a96]" /></span>
        <div className="w-[526px] flex items-stretch bg-[#7595c4]">
          <button aria-label="Scroll left" className="w-[19px] flex items-center justify-center">
            <svg width="5" height="8" viewBox="0 0 5 8"><path d="M5 0V8L0 4Z" fill="#2c4370" /></svg>
          </button>
          <div className="w-[399px] flex items-center justify-center border-x border-[#4d6a96] bg-linear-to-b from-[#eef2f7] via-[#cdd7e3] to-[#b3c1d3]">
            <svg width="8" height="8" viewBox="0 0 8 8" stroke="#5c6f8e">
              <path d="M.5 0V8M2.500 0V8M4.500 0V8M6.500 0V8" />
            </svg>
          </div>
          <button aria-label="Scroll right" className="ml-auto w-[19px] flex items-center justify-center">
            <svg width="5" height="8" viewBox="0 0 5 8"><path d="M0 0V8L5 4Z" fill="#2c4370" /></svg>
          </button>
        </div>
        <span className="w-[6px] px-[2px] py-1 bg-white flex"><span className="w-px bg-[#4d6a96]" /></span>
        <span className="w-4 bg-[#7a9cd2]" />
      </div>
    </div>
  );
}

function ZoomStep({ label, d }) {
  return (
    <button aria-label={label}>
      <svg width="16" height="16" viewBox="0 0 16 16">
        <circle cx="8" cy="8" r="7.200" fill="#eaf1fb" stroke="#4b6388" />
        <path d={d} stroke="#3a4d70" strokeWidth="2" />
      </svg>
    </button>
  );
}

function StatusBar() {
  const [zoom, setZoom] = useState(50);
  return (
    <footer className="h-[22px] flex items-stretch border-y border-[#dceafa] bg-linear-to-b from-[#dbe8fa] via-[#b3cff5] to-[#d5e5fb]">
      <span className="w-[47px] pl-[7px] flex items-center border-r border-[#9dbbe3]">Ready</span>
      <div className="ml-auto pl-1 pr-1 flex items-center border-l border-[#5f83b8] bg-linear-to-b from-[#a5c3ee] via-[#7ea6df] to-[#9dbeee]">
        <div className="h-[18px] flex items-center rounded-[2px] border border-[#7898c8] bg-[#cfdff5]">
          <button aria-label="Normal view" className="w-[18px] h-full flex items-center justify-center bg-[#fbd78b]">
            <svg width="14" height="11" viewBox="0 0 14 11" fill="#fff" stroke="#665a44">
              <path d="M.5.500H13.500V10.500H.5ZM5 .5V10.500M9 .5V10.500M.5 4H13.500M.5 7.500H13.500" />
            </svg>
          </button>
          <button aria-label="Page layout view" className="w-[19px] flex justify-center">
            <svg width="13" height="11" viewBox="0 0 13 11">
              <path d="M.5.500H12.500V10.500H.5Z" fill="#a9b0bd" stroke="#59616f" />
              <path d="M3.500 1.500H9.500V9.500H3.500Z" fill="#fff" stroke="#59616f" />
              <path d="M5 4H8M5 6H8" stroke="#59616f" />
            </svg>
          </button>
          <button aria-label="Page break preview" className="w-[18px] flex justify-center">
            <svg width="13" height="11" viewBox="0 0 13 11">
              <path d="M.5.500H12.500V10.500H.5Z" fill="#a9b0bd" stroke="#59616f" />
              <path d="M1 1H5V6H1ZM6 1H9V6H6Z" fill="#fff" />
              <path d="M5.500 0V6.500H1M9.500 0V6.500H6" fill="none" stroke="#59616f" />
            </svg>
          </button>
        </div>
        <span className="w-[45px] text-center">100%</span>
        <ZoomStep label="Zoom out" d="M4.500 8H11.500" />
        <input
          type="range"
          aria-label="Zoom"
          value={zoom}
          onChange={(e) => setZoom(Number(e.target.value))}
          className="w-[102px] h-[14px] appearance-none bg-[linear-gradient(#dbe8fa,#dbe8fa)] bg-[length:100%_1px] bg-center bg-no-repeat [&::-webkit-slider-thumb]:appearance-none [&::-webkit-slider-thumb]:w-[9px] [&::-webkit-slider-thumb]:h-[12px] [&::-webkit-slider-thumb]:bg-[linear-gradient(90deg,#4b6388_1px,#f2f6fc_1px,#c3d3ea_8px,#4b6388_8px)] [&::-webkit-slider-thumb]:[clip-path:polygon(0_0,100%_0,100%_65%,50%_100%,0_65%)]"
        />
        <ZoomStep label="Zoom in" d="M4.500 8H11.500M8 4.500V11.500" />
      </div>
    </footer>
  );
}

function App() {
  return (
    <div className="text-[11px] text-[#15428b] font-['Open_Sans',sans-serif] overflow-hidden">
      <TitleBar />
      <TabRow />
      <Ribbon />
      <FormulaBar />
      <main className="flex">
        <div className="flex-1 min-w-0 pb-[2px] bg-white">
          <Sheet />
        </div>
        <VerticalScroll />
      </main>
      <SheetTabs />
      <StatusBar />
      <div className="h-[5px] flex">
        <span className="w-12 bg-[#cfe5da]" />
        <span className="w-[288px] bg-white border-r border-[#b9c9c0]" />
        <span className="flex-1 bg-linear-to-r from-[#d8e8dd] via-[#f3d5da] to-[#f1f1ec]" />
      </div>
    </div>
  );
}

export default App;
